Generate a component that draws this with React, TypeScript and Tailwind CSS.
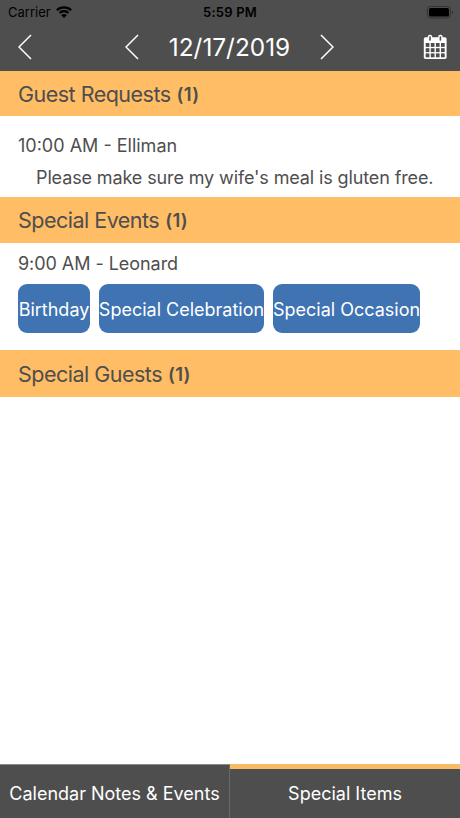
import type { ReactNode } from "react";

const EVENT_TAGS = [
	{ label: "Birthday", size: "w-[72px]" },
	{ label: "Special Celebration", size: "w-[165px]" },
	{ label: "Special Occasion", size: "w-[147px]" },
];

function WifiIcon() {
	return (
		<svg width="16" height="12" viewBox="0 0 16 12" fill="none" aria-hidden>
			<path d="M.8 4.3a10.2 10.2 0 0 1 14.4 0" stroke="#000" strokeWidth="2.3" />
			<path d="M3.5 7a6.4 6.4 0 0 1 9 0" stroke="#000" strokeWidth="2.1" />
			<path d="M8 12 5.2 9.3a4 4 0 0 1 5.6 0z" fill="#000" />
		</svg>
	);
}

function BatteryIcon() {
	return (
		<svg width="27" height="13" viewBox="0 0 27 13" fill="none" aria-hidden>
			<rect
				x=".5"
				y=".5"
				width="23"
				height="11.5"
				rx="3"
				stroke="#2f2f2f"
				strokeWidth=".9"
			/>
			<rect x="2" y="2" width="20" height="8.5" rx="1.6" fill="#000" />
			<path d="M25 4.5v3.6c1.5-.6 1.5-3 0-3.6z" fill="#2f2f2f" />
		</svg>
	);
}

function Chevron({ right = false }: { right?: boolean }) {
	return (
		<svg width="14" height="26" viewBox="0 0 14 26" fill="none" aria-hidden>
			<path
				d={right ? "M1 1l12 12L1 25" : "M13 1L1 13l12 12"}
				stroke="#fff"
				strokeWidth="1.5"
			/>
		</svg>
	);
}

function CalendarIcon() {
	return (
		<svg width="24" height="26" viewBox="0 0 24 26" aria-hidden>
			<rect x=".8" y="3.2" width="22.8" height="21.8" rx="1.7" fill="#fff" />
			{[2.7, 7.8, 12.9, 18].map((x) =>
				[9, 14.2, 19.4].map((y) => (
					<rect
						key={`${x}-${y}`}
						x={x}
						y={y}
						width="3.7"
						height="3.9"
						fill="#4e4e4e"
					/>
				)),
			)}
			{[4.8, 15.2].map((x) => (
				<g key={x}>
					<rect x={x} y=".7" width="4.4" height="6.8" rx="2" fill="#fff" />
					<rect
						x={x + 1.4}
						y="2.2"
						width="1.6"
						height="4.5"
						rx=".7"
						fill="#4e4e4e"
					/>
				</g>
			))}
		</svg>
	);
}

function SectionHeader({
	children,
	count,
	className,
}: {
	children: ReactNode;
	count: number;
	className: string;
}) {
	return (
		<h2
			className={`flex items-center gap-[6px] bg-[#ffbd66] pt-px pl-[18px] text-[21.5px] text-[#4e4e4e] ${className}`}
		>
			<span className="tracking-[-0.51px]">{children}</span>
			<span className="pt-px text-[18.5px] font-semibold tracking-[0.3px]">
				({count})
			</span>
		</h2>
	);
}

export default function App() {
	return (
		<div className="flex h-[818px] w-[460px] flex-col overflow-hidden bg-white font-['Inter','Liberation_Sans',sans-serif] text-[18px] whitespace-nowrap text-[#4e4e4e]">
			<header className="h-[71px] bg-[#4e4e4e]">
				<div className="grid h-6 grid-cols-3 items-center pr-[6px] pl-2 text-[13px] text-black">
					<div className="flex items-center gap-[5px]">
						<span className="pt-px">Carrier</span>
						<WifiIcon />
					</div>
					<span className="pt-px pr-[2px] text-center font-semibold tracking-[0.2px]">
						5:59 PM
					</span>
					<div className="flex justify-end">
						<BatteryIcon />
					</div>
				</div>
				<div className="flex h-[46px] items-center pr-[13px] pl-[18px] text-white">
					<button type="button" aria-label="Back">
						<Chevron />
					</button>
					<div className="ml-[93px] flex items-center">
						<button type="button" aria-label="Previous day">
							<Chevron />
						</button>
						<h1 className="w-[181px] pt-px text-center text-[24.4px]">
							12/17/2019
						</h1>
						<button type="button" aria-label="Next day">
							<Chevron right />
						</button>
					</div>
					<button type="button" aria-label="Open calendar" className="ml-auto">
						<CalendarIcon />
					</button>
				</div>
			</header>

			<main className="flex-1">
				<SectionHeader count={1} className="h-[45px]">
					Guest Requests
				</SectionHeader>
				<div className="h-[81px] px-[18px] pt-[14px]">
					<p className="h-8 leading-8">10:00 AM - Elliman</p>
					<p className="pl-[18px] leading-[31px] tracking-[-0.12px]">
						Please make sure my wife's meal is gluten free.
					</p>
				</div>

				<SectionHeader count={1} className="h-[46px] pt-[2px]">
					Special Events
				</SectionHeader>
				<div className="h-[107px] px-[18px] pt-[5px]">
					<p className="leading-8 tracking-[-0.05px]">9:00 AM - Leonard</p>
					<div className="mt-[4px] flex gap-[9px]">
						{EVENT_TAGS.map((tag) => (
							<span
								key={tag.label}
								className={`flex h-[49px] items-center justify-center rounded-[9px] bg-[#3f73b1] pt-px text-white ${tag.size}`}
							>
								{tag.label}
							</span>
						))}
					</div>
				</div>

				<SectionHeader count={1} className="h-[47px]">
					Special Guests
				</SectionHeader>
			</main>

			<nav className="grid h-[54px] grid-cols-2 bg-[#4e4e4e] text-white">
				<button
					type="button"
					className="border-t border-r border-t-[#8b8c86] border-r-[#696969] pt-1"
				>
					Calendar Notes & Events
				</button>
				<button type="button" className="border-t-[5px] border-[#f7bb63]">
					Special Items
				</button>
			</nav>
		</div>
	);
}
